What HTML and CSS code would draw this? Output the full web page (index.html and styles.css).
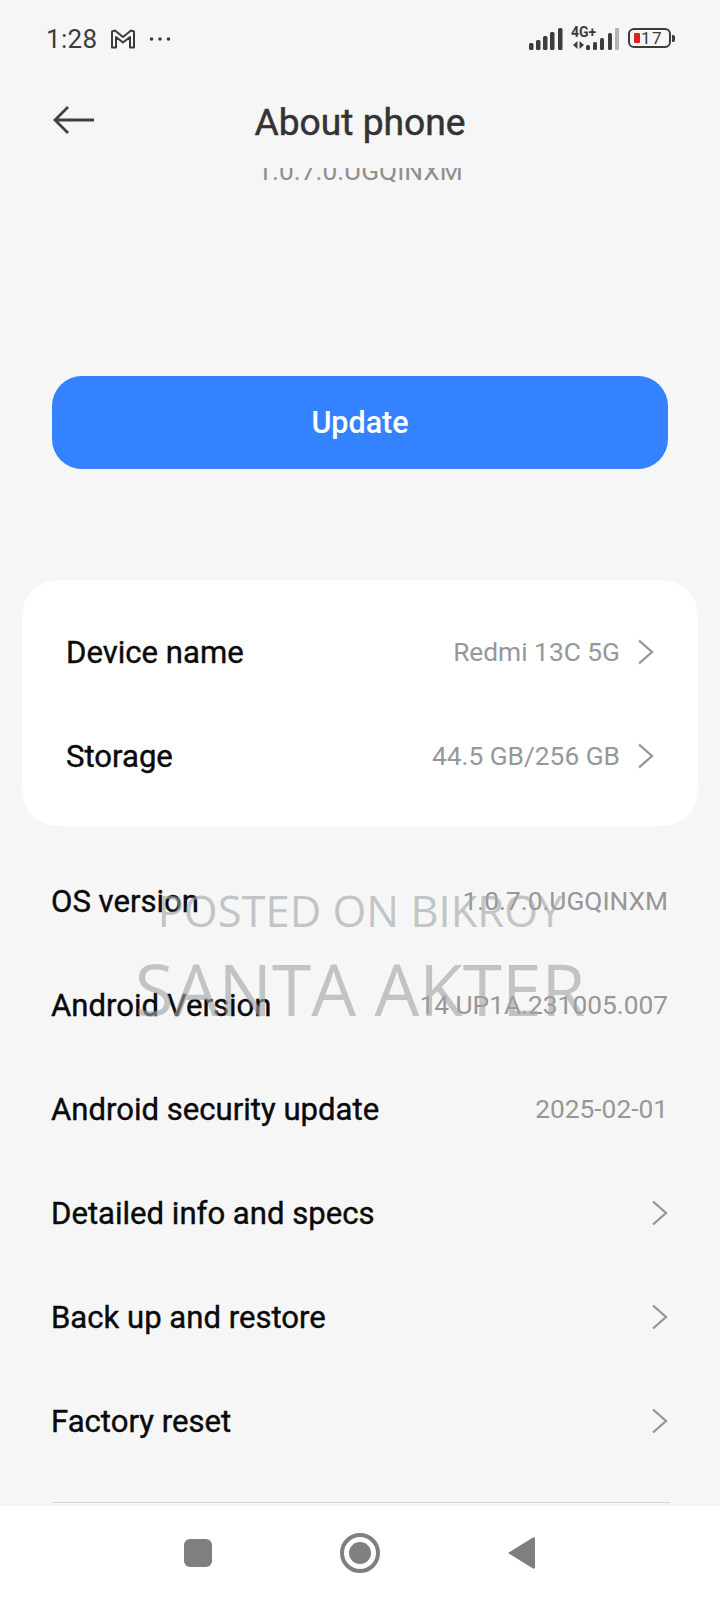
FILE: index.html
```html
<!DOCTYPE html>
<html lang="en">
<head>
<meta charset="utf-8">
<title>About phone</title>
<link rel="stylesheet" href="styles.css">
</head>
<body>
<div class="phone">
  <div class="status">
    <div class="status-left">
      <span class="time">1:28</span>
      <svg class="gmail" width="26" height="20" viewBox="0 0 26 20"><path d="M2 18.500V2.500L5 1.500L13 8L21 1.500L24 2.500V18.500H20V8L13 13.500L6 8V18.500Z" fill="none" stroke="#3c3c3c" stroke-width="2" stroke-linejoin="round"/></svg>
      <svg class="dots" width="22" height="6" viewBox="0 0 22 6"><circle cx="2.500" cy="3" r="1.800" fill="#3c3c3c"/><circle cx="11" cy="3" r="1.800" fill="#3c3c3c"/><circle cx="19.500" cy="3" r="1.800" fill="#3c3c3c"/></svg>
    </div>
    <div class="status-right">
      <svg width="34" height="24" viewBox="0 0 34 24"><g fill="#3c3c3c"><rect x="0" y="16" width="4.500" height="7" rx="1.500"/><rect x="7" y="13" width="4.500" height="10" rx="1.500"/><rect x="14" y="9" width="4.500" height="14" rx="1.500"/><rect x="21" y="5" width="4.500" height="18" rx="1.500"/><rect x="29" y="1" width="4.500" height="22" rx="1.500"/></g></svg>
      <div class="net">
        <span class="net-label">4G+</span>
        <svg class="net-arrows" width="11" height="8" viewBox="0 0 11 8"><path d="M0 4L4.500 0V8ZM6.500 0L11 4L6.500 8Z" fill="#3c3c3c"/></svg>
      </div>
      <svg class="sig2" width="34" height="24" viewBox="0 0 34 24"><g fill="#3c3c3c"><rect x="0" y="18" width="4" height="5" rx="1.500"/><rect x="7" y="15" width="4" height="8" rx="1.500"/><rect x="14" y="11" width="4" height="12" rx="1.500"/><rect x="22" y="6" width="4" height="17" rx="1.500"/></g><rect x="29" y="1" width="4" height="22" rx="1" fill="#b4b4b4"/></svg>
      <div class="battery">
        <span class="battery-fill"></span>
        <span class="battery-num">17</span>
      </div>
      <span class="battery-tip"></span>
    </div>
  </div>

  <div class="header">
    <svg class="back" width="42" height="30" viewBox="0 0 42 30"><path d="M15 2L2 15L15 28M2 15H41" fill="none" stroke="#404040" stroke-width="2.800"/></svg>
    <h1 class="title">About phone</h1>
  </div>

  <div class="content">
    <div class="clip"><p class="clip-text">1.0.7.0.UGQINXM</p></div>
    <button class="update">Update</button>

    <div class="card">
      <div class="row card-row">
        <span class="label">Device name</span>
        <span class="right"><span class="value">Redmi 13C 5G</span><svg class="chev" width="16" height="26" viewBox="0 0 16 26"><path d="M1 1.500L14 13L1 24.500" fill="none" stroke="#959595" stroke-width="2.300"/></svg></span>
      </div>
      <div class="row card-row">
        <span class="label">Storage</span>
        <span class="right"><span class="value">44.5 GB/256 GB</span><svg class="chev" width="16" height="26" viewBox="0 0 16 26"><path d="M1 1.500L14 13L1 24.500" fill="none" stroke="#959595" stroke-width="2.300"/></svg></span>
      </div>
    </div>

    <div class="list">
      <div class="row"><span class="label">OS version</span><span class="value">1.0.7.0.UGQINXM</span></div>
      <div class="row"><span class="label">Android Version</span><span class="value">14 UP1A.231005.007</span></div>
      <div class="row"><span class="label">Android security update</span><span class="value">2025-02-01</span></div>
      <div class="row"><span class="label">Detailed info and specs</span><svg class="chev" width="16" height="26" viewBox="0 0 16 26"><path d="M1 1.500L14 13L1 24.500" fill="none" stroke="#959595" stroke-width="2.300"/></svg></div>
      <div class="row"><span class="label">Back up and restore</span><svg class="chev" width="16" height="26" viewBox="0 0 16 26"><path d="M1 1.500L14 13L1 24.500" fill="none" stroke="#959595" stroke-width="2.300"/></svg></div>
      <div class="row"><span class="label">Factory reset</span><svg class="chev" width="16" height="26" viewBox="0 0 16 26"><path d="M1 1.500L14 13L1 24.500" fill="none" stroke="#959595" stroke-width="2.300"/></svg></div>
    </div>
    <div class="divider"></div>
  </div>

  <div class="nav">
    <span class="nav-square"></span>
    <span class="nav-circle"><span class="nav-dot"></span></span>
    <svg class="nav-back" width="27" height="32" viewBox="0 0 27 32"><path d="M27 2V30C27 31.500 26 32 25 31.500L0 16L25 .5C26 0 27 .5 27 2Z" fill="#7f7f7f"/></svg>
  </div>

  <div class="watermark">
    <div class="wm-top">POSTED ON BIKROY</div>
    <div class="wm-main">SANTA AKTER</div>
  </div>
</div>
</body>
</html>
```
FILE: styles.css
```css
* { box-sizing: border-box; }
html, body { margin: 0; padding: 0; }
body { font-family: Roboto, "Liberation Sans", sans-serif; background: #f6f6f6; }

.phone {
  position: relative;
  width: 720px;
  height: 1600px;
  display: flex;
  flex-direction: column;
  background: #f6f6f6;
  overflow: hidden;
}

.status {
  height: 78px;
  padding: 16px 45px 0 46px;
  display: flex;
  justify-content: space-between;
  align-items: flex-start;
}
.status-left { display: flex; align-items: center; height: 46px; }
.time { font-size: 26px; color: #3c3c3c; letter-spacing: .3px; width: 64px; }
.dots { margin-left: 13px; }
.status-right { display: flex; align-items: flex-end; height: 35px; }
.net { width: 25px; margin-left: 8px; display: flex; flex-direction: column; align-items: flex-start; }
.net-label { font-size: 14px; font-weight: 700; color: #3c3c3c; line-height: 13px; }
.net-arrows { margin: 2px 0 2px 2px; }
.sig2 { margin-left: -10px; }
.battery {
  width: 43px;
  height: 20px;
  margin-left: 8px;
  margin-bottom: 3px;
  border: 2px solid #3c3c3c;
  border-radius: 6px;
  display: flex;
  align-items: center;
  padding-left: 4px;
}
.battery-fill { width: 6px; height: 10px; background: #e02020; border-radius: 1px; }
.battery-num { font-size: 17px; line-height: 15px; color: #3c3c3c; letter-spacing: 1.500px; margin-left: 1px; }
.battery-tip { width: 3px; height: 7px; background: #3c3c3c; margin-left: 1px; margin-bottom: 9px; border-radius: 0 2px 2px 0; }

.header {
  position: relative;
  height: 86px;
  padding-top: 1px;
  display: flex;
  align-items: center;
  justify-content: center;
  flex: none;
}
.back { position: absolute; left: 53px; top: 27px; }
.title { margin: 0; font-size: 37.200px; font-weight: 400; -webkit-text-stroke: .5px #333; color: #333; line-height: 84px; }

.content { flex: 1; display: flex; flex-direction: column; align-items: stretch; }
.clip { height: 14px; margin-top: 4px; overflow: hidden; flex: none; }
.clip-text { margin: -13px 0 0; text-align: center; font-size: 26.300px; line-height: 32px; color: #8f8f8f; }

.update {
  display: block;
  margin: 194px 52px 0;
  height: 93px;
  width: 616px;
  flex: none;
  border: 0;
  border-radius: 30px;
  background: #3482ff;
  color: #fff;
  font-family: inherit;
  font-size: 30.500px;
  font-weight: 500;
}

.card {
  margin: 111px 22px 0;
  padding: 20px 0 18px;
  background: #fff;
  border-radius: 36px;
}
.row {
  height: 104px;
  display: flex;
  align-items: center;
  justify-content: space-between;
  padding: 0 52px 0 51px;
  flex: none;
}
.card-row { padding: 0 44px; }
.label { font-size: 31.100px; font-weight: 400; -webkit-text-stroke: .4px #0a0a0a; color: #0a0a0a; }
.value { font-size: 26.300px; color: #979797; }
.right { display: flex; align-items: center; }
.right .chev { margin-left: 18px; }
.list { margin-top: 23px; }
.divider { height: 1px; margin: 29px 50px 0 52px; background: #d6d6d6; flex: none; }

.nav {
  height: 94px;
  flex: none;
  background: #fff;
  display: flex;
  align-items: center;
  justify-content: space-between;
  padding: 0 185px 0 184px;
}
.nav-square { width: 28px; height: 28px; background: #7f7f7f; border-radius: 6px; }
.nav-circle {
  width: 40px;
  height: 40px;
  border: 4px solid #7f7f7f;
  border-radius: 50%;
  display: flex;
  align-items: center;
  justify-content: center;
}
.nav-dot { width: 22px; height: 22px; border-radius: 50%; background: #7f7f7f; }

.watermark {
  position: absolute;
  left: 0;
  top: 876px;
  width: 720px;
  text-align: center;
  font-family: "Open Sans", "Noto Sans", sans-serif;
  color: rgba(160,165,170,.62);
  pointer-events: none;
}
.wm-top { font-size: 43.500px; line-height: 70px; }
.wm-main { font-size: 71px; line-height: 86px; }
```
